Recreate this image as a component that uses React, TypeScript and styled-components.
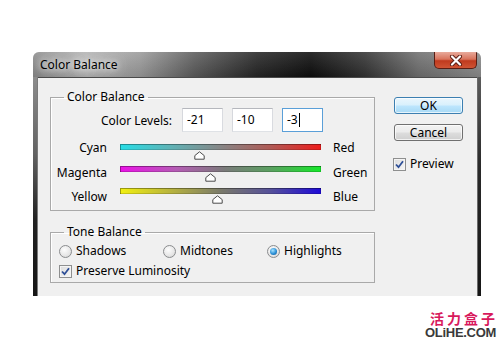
import * as React from 'react';
import styled, { createGlobalStyle } from 'styled-components';

const GlobalStyle = createGlobalStyle`
  html, body {
    margin: 0;
    padding: 0;
    background: #fff;
  }
  body {
    font-family: "Noto Sans", "Open Sans", sans-serif;
    color: #000;
  }
`;

const Page = styled.div`
  width: 500px;
  height: 350px;
  box-sizing: border-box;
  padding: 52px 0 0 33px;
  overflow: hidden;
`;

const Window = styled.div`
  width: 448px;
  display: flex;
  flex-direction: column;
  border-radius: 6px 6px 0 0;
  overflow: hidden;
`;

const TitleBar = styled.div`
  height: 25px;
  display: flex;
  align-items: flex-start;
  padding-left: 7px;
  background:
    linear-gradient(to bottom, rgba(255,255,255,0.12), rgba(0,0,0,0.1)),
    linear-gradient(to right, #8a8a8a 0%, #b4b4b4 12%, #9a9a9a 24%, #5c5c5c 36%, #262626 50%, #0e0e0e 62%, #333 74%, #6f6f6f 86%, #8c8c8c 100%);
`;

const Title = styled.span`
  font-size: 12px;
  line-height: 25px;
  color: #000;
  text-shadow: 0 0 6px rgba(255,255,255,0.95), 0 0 12px rgba(255,255,255,0.85), 0 0 18px rgba(255,255,255,0.7);
`;

const CloseButton = styled.div`
  width: 43px;
  height: 17px;
  margin-left: auto;
  margin-right: 4px;
  box-sizing: border-box;
  border: 1px solid #5a1e14;
  border-top: none;
  border-radius: 0 0 5px 5px;
  background: linear-gradient(to bottom, #e8aa9b 0%, #d8735c 45%, #c03a1e 55%, #cf5434 100%);
  display: flex;
  align-items: center;
  justify-content: center;
`;

const Body = styled.div`
  height: 219px;
  display: flex;
`;

const LeftFrame = styled.div`
  width: 5px;
  background: linear-gradient(to bottom, #8c8c8c 0%, #626262 35%, #222 65%, #151515 100%);
  box-shadow: inset -1px 0 0 #7a7a7a;
`;

const RightFrame = styled.div`
  width: 4px;
  background: linear-gradient(to bottom, #5c5c5c 0%, #2a2a2a 40%, #161616 100%);
  box-shadow: inset 1px 0 0 #6a6a6a;
`;

const Client = styled.div`
  width: 439px;
  box-sizing: border-box;
  background: #f0f0f0;
  border-top: 1px solid #4a4a4a;
  padding-left: 12px;
  display: grid;
  grid-template-columns: 325px 69px;
  column-gap: 19px;
  align-items: start;
`;

const LeftColumn = styled.div`
  display: flex;
  flex-direction: column;
`;

const GroupBox = styled.fieldset<{ $top: number }>`
  margin: ${p => p.$top}px 0 0;
  padding: 0;
  border: 1px solid #a9a9a9;
  box-shadow: inset 1px 1px 0 #fff;
  min-inline-size: auto;
`;

const Legend = styled.legend`
  margin-left: 13px;
  padding: 0 3px;
  font-size: 12px;
  line-height: 14px;
`;

const GroupBody = styled.div<{ $pad: string }>`
  padding: ${p => p.$pad};
  display: flex;
  flex-direction: column;
`;

const LevelsRow = styled.div`
  display: flex;
  align-items: center;
  gap: 9px;
  height: 24px;
  margin-bottom: 9px;
`;

const LevelsLabel = styled.span`
  width: 121px;
  margin-right: 1px;
  text-align: right;
  font-size: 12px;
`;

const LevelField = styled.div<{ $focused?: boolean }>`
  width: 41px;
  height: 24px;
  box-sizing: border-box;
  border: 1px solid;
  border-color: ${p => (p.$focused ? '#5a9fd8' : '#b5b7bd #d9dbe0 #dfe2e6 #d6d8dd')};
  background: #fff;
  padding-left: 4px;
  font-size: 12px;
  line-height: 22px;
`;

const Caret = styled.span`
  display: inline-block;
  width: 1px;
  height: 14px;
  margin-left: 1px;
  vertical-align: -3px;
  background: #000;
`;

const SliderGrid = styled.div`
  display: grid;
  grid-template-columns: 56px 201px auto;
  column-gap: 13px;
  height: 66px;
`;

const LabelColumn = styled.div<{ $right?: boolean }>`
  display: flex;
  flex-direction: column;
  gap: 10.5px;
  text-align: ${p => (p.$right ? 'right' : 'left')};
  margin-left: ${p => (p.$right ? 0 : -1)}px;
`;

const SideLabel = styled.span`
  font-size: 12px;
  line-height: 14px;
`;

const TrackColumn = styled.div`
  display: flex;
  flex-direction: column;
  padding-top: 3px;
`;

const TrackSlot = styled.div`
  height: 22px;
`;

const Track = styled.div<{ $colors: string }>`
  position: relative;
  height: 6px;
  background: linear-gradient(to right, ${p => p.$colors});
  box-shadow: inset 1px 1px 0 rgba(0,0,0,0.35), inset -1px -1px 0 rgba(0,0,0,0.15);
`;

const Thumb = styled.svg`
  position: absolute;
  top: 7px;
  width: 11px;
  height: 9px;
  margin-left: -5px;
`;

const RadioRow = styled.div`
  display: grid;
  grid-template-columns: repeat(3, 104px);
  padding-left: 8px;
  height: 16px;
  align-items: center;
`;

const OptionItem = styled.label`
  display: flex;
  align-items: center;
  gap: 4px;
  font-size: 12px;
  line-height: 14px;
`;

const CheckRow = styled.div`
  padding-left: 8px;
  margin-top: 4px;
  height: 16px;
  display: flex;
  align-items: center;
`;

const RadioDot = styled.span<{ $on?: boolean }>`
  width: 13px;
  height: 13px;
  box-sizing: border-box;
  border-radius: 50%;
  border: 1px solid #8a8c8e;
  background: radial-gradient(circle at 40% 35%, #fdfdfd 0%, #e6e6e6 60%, #cfcfcf 100%);
  display: flex;
  align-items: center;
  justify-content: center;

  &::after {
    content: '';
    display: ${p => (p.$on ? 'block' : 'none')};
    width: 7px;
    height: 7px;
    border-radius: 50%;
    background: radial-gradient(circle at 40% 35%, #a8e4ff 0%, #2a8fd6 55%, #0b4f8a 100%);
  }
`;

const CheckBox = styled.span`
  width: 13px;
  height: 13px;
  box-sizing: border-box;
  border: 1px solid #8e8f8f;
  background: linear-gradient(135deg, #dcdcdc 0%, #f6f6f6 100%);
  box-shadow: inset 0 0 0 1px #f4f4f4;
  display: flex;
  align-items: center;
  justify-content: center;
  flex-shrink: 0;
`;

const RightColumn = styled.div`
  display: flex;
  flex-direction: column;
  padding-top: 19px;
`;

const Button = styled.div<{ $primary?: boolean }>`
  height: 17px;
  box-sizing: border-box;
  border: 1px solid ${p => (p.$primary ? '#3c7fb1' : '#707070')};
  border-radius: 3px;
  background: ${p =>
    p.$primary
      ? 'linear-gradient(to bottom, #eaf6fd 0%, #d9f0fc 48%, #bee6fd 52%, #a7d9f5 100%)'
      : 'linear-gradient(to bottom, #f2f2f2 0%, #ebebeb 48%, #dddddd 52%, #cfcfcf 100%)'};
  box-shadow: inset 0 0 0 1px rgba(255,255,255,0.7);
  font-size: 12px;
  line-height: 15px;
  text-align: center;
  margin-bottom: 10px;
`;

const PreviewRow = styled.label`
  display: flex;
  align-items: center;
  gap: 4px;
  margin-top: 6px;
  margin-left: -1px;
  font-size: 12px;
  line-height: 14px;
`;

const Watermark = styled.div`
  margin-top: 14px;
  padding-right: 4px;
  text-align: right;
`;

const WatermarkCjk = styled.div`
  font-family: "Noto Sans CJK SC", sans-serif;
  font-weight: 700;
  font-size: 14px;
  line-height: 16px;
  letter-spacing: 3px;
  margin-right: -2px;
  color: #d8195c;
`;

const WatermarkBrand = styled.div`
  font-family: "Liberation Sans", Arial, sans-serif;
  font-weight: 700;
  font-size: 13px;
  line-height: 13px;
  letter-spacing: -0.3px;
  color: #3a3a3a;
`;

const CheckMark = () => (
  <svg width="9" height="9" viewBox="0 0 9 9">
    <path d="M1 4.5 L3.5 7.2 L8 1.2" fill="none" stroke="#2e4f97" strokeWidth="1.8" />
  </svg>
);

const CloseGlyph = () => (
  <svg width="14" height="11" viewBox="0 0 14 11">
    <path d="M3 1.5 L11 9.5 M11 1.5 L3 9.5" stroke="#5a1c12" strokeWidth="4" strokeLinecap="round" />
    <path d="M3 1.5 L11 9.5 M11 1.5 L3 9.5" stroke="#fff" strokeWidth="2.2" strokeLinecap="round" />
  </svg>
);

const sliders = [
  { left: 'Cyan', right: 'Red', value: -21, colors: '#26dde6 0%, #5fb3b6 25%, #868686 50%, #b05a55 75%, #ee1c1c 100%' },
  { left: 'Magenta', right: 'Green', value: -10, colors: '#ea12e6 0%, #b55cb4 28%, #7a7a7a 52%, #5aa060 75%, #16e82a 100%' },
  { left: 'Yellow', right: 'Blue', value: -3, colors: '#f2f010 0%, #b8b43e 25%, #7a7a6a 50%, #55509a 75%, #1e0ad8 100%' },
];

const App: React.FC = () => {
  return (
    <Page>
      <GlobalStyle />
      <Window>
        <TitleBar>
          <Title>Color Balance</Title>
          <CloseButton>
            <CloseGlyph />
          </CloseButton>
        </TitleBar>
        <Body>
          <LeftFrame />
          <Client>
            <LeftColumn>
              <GroupBox $top={12}>
                <Legend>Color Balance</Legend>
                <GroupBody $pad="4px 0 3px 0">
                  <LevelsRow>
                    <LevelsLabel>Color Levels:</LevelsLabel>
                    <LevelField>-21</LevelField>
                    <LevelField>-10</LevelField>
                    <LevelField $focused>
                      -3
                      <Caret />
                    </LevelField>
                  </LevelsRow>
                  <SliderGrid>
                    <LabelColumn $right>
                      {sliders.map(s => (
                        <SideLabel key={s.left}>{s.left}</SideLabel>
                      ))}
                    </LabelColumn>
                    <TrackColumn>
                      {sliders.map(s => (
                        <TrackSlot key={s.left}>
                          <Track $colors={s.colors}>
                            <Thumb viewBox="0 0 11 9" style={{ left: `${(s.value + 100) / 2}%` }}>
                              <path d="M5.5 0.8 L10.2 4.6 L10.2 8.2 L0.8 8.2 L0.8 4.6 Z" fill="#fff" stroke="#4a4a4a" strokeWidth="1" />
                            </Thumb>
                          </Track>
                        </TrackSlot>
                      ))}
                    </TrackColumn>
                    <LabelColumn>
                      {sliders.map(s => (
                        <SideLabel key={s.right}>{s.right}</SideLabel>
                      ))}
                    </LabelColumn>
                  </SliderGrid>
                </GroupBody>
              </GroupBox>
              <GroupBox $top={14}>
                <Legend>Tone Balance</Legend>
                <GroupBody $pad="4px 0 3px 0">
                  <RadioRow>
                    <OptionItem>
                      <RadioDot />
                      Shadows
                    </OptionItem>
                    <OptionItem>
                      <RadioDot />
                      Midtones
                    </OptionItem>
                    <OptionItem>
                      <RadioDot $on />
                      Highlights
                    </OptionItem>
                  </RadioRow>
                  <CheckRow>
                    <OptionItem>
                      <CheckBox>
                        <CheckMark />
                      </CheckBox>
                      Preserve Luminosity
                    </OptionItem>
                  </CheckRow>
                </GroupBody>
              </GroupBox>
            </LeftColumn>
            <RightColumn>
              <Button $primary>OK</Button>
              <Button>Cancel</Button>
              <PreviewRow>
                <CheckBox>
                  <CheckMark />
                </CheckBox>
                Preview
              </PreviewRow>
            </RightColumn>
          </Client>
          <RightFrame />
        </Body>
      </Window>
      <Watermark>
        <WatermarkCjk>活力盒子</WatermarkCjk>
        <WatermarkBrand>OLiHE.COM</WatermarkBrand>
      </Watermark>
    </Page>
  );
};

export default App;
